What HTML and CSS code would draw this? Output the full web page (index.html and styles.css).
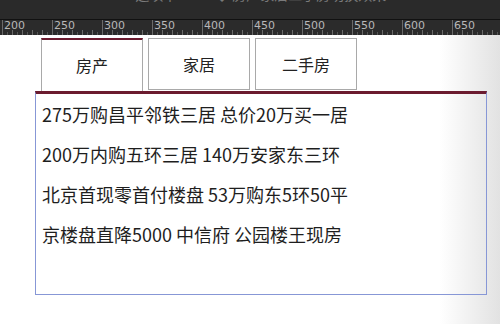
FILE: index.html
```html
<!DOCTYPE html>
<html lang="zh-CN">
<head>
    <meta charset="UTF-8">
    <title>选项卡</title>
    <link rel="stylesheet" href="styles.css">
</head>
<body>
<div id="titlebar">
    <span>tab选项卡.html ◆ 房产家居二手房切换效果</span>
</div>
<div id="ruler">
    <span>200</span>
    <span>250</span>
    <span>300</span>
    <span>350</span>
    <span>400</span>
    <span>450</span>
    <span>500</span>
    <span>550</span>
    <span>600</span>
    <span>650</span>
</div>
<div id="stage">
    <ul id="tabs">
        <li class="selected">房产</li>
        <li>家居</li>
        <li>二手房</li>
    </ul>
    <div id="content">
        <ul class="list">
            <li>275万购昌平邻铁三居 总价20万买一居</li>
            <li>200万内购五环三居 140万安家东三环</li>
            <li>北京首现零首付楼盘 53万购东5环50平</li>
            <li>京楼盘直降5000 中信府 公园楼王现房</li>
        </ul>
    </div>
</div>
</body>
</html>
```
FILE: styles.css
```css
*{
    margin:0;
    padding:0;
    box-sizing: border-box;
}
ul{
    list-style:none;
}
body{
    width: 500px;
    height: 324px;
    overflow: hidden;
    font-family: "Noto Sans CJK SC", sans-serif;
    background: linear-gradient(to right, #ffffff 0, #ffffff 440px, #e2e2e2 500px);
}
#titlebar{
    height: 20px;
    background: #2a2a2a;
    border-bottom: 1px solid #111111;
    overflow: hidden;
    text-align: center;
}
#titlebar span{
    display: block;
    margin-top: -15px;
    font-size: 14px;
    line-height: 18px;
    color: #7a7a7a;
}
#ruler{
    height: 15px;
    padding-left: 2px;
    display: flex;
    overflow: hidden;
    background-color: #2b2b2b;
    background-image:
        repeating-linear-gradient(to right, #6a6a6a 0 1px, transparent 1px 10px),
        repeating-linear-gradient(to right, #555555 0 1px, transparent 1px 5px);
    background-size: 100% 5px, 100% 3px;
    background-position: 2px bottom, 2px bottom;
    background-repeat: no-repeat;
}
#ruler span{
    flex: 0 0 50px;
    border-left: 1px solid #6a6a6a;
    padding-left: 1px;
    font-family: "DejaVu Sans", sans-serif;
    font-size: 11px;
    line-height: 12px;
    color: #b8b8b8;
}
#stage{
    padding: 3px 0 0 35px;
}
#tabs{
    display: flex;
    gap: 5px;
    height: 53px;
    margin-left: 6px;
}
#tabs li{
    width: 102px;
    height: 52px;
    border: 1px solid #a9a9a9;
    background: #ffffff;
    text-align: center;
    line-height: 50px;
    font-size: 16px;
    color: #222222;
    cursor: pointer;
}
#tabs .selected{
    height: 53px;
    border-top: 2px solid #6b1b2f;
    border-bottom: none;
}
#content{
    width: 452px;
    height: 204px;
    border: 1px solid #8797d6;
    border-top: 3px solid #6b1b2f;
}
.list{
    padding: 0 0 0 6px;
}
.list li{
    font-size: 18px;
    line-height: 40px;
    color: #1e1e1e;
}
```
